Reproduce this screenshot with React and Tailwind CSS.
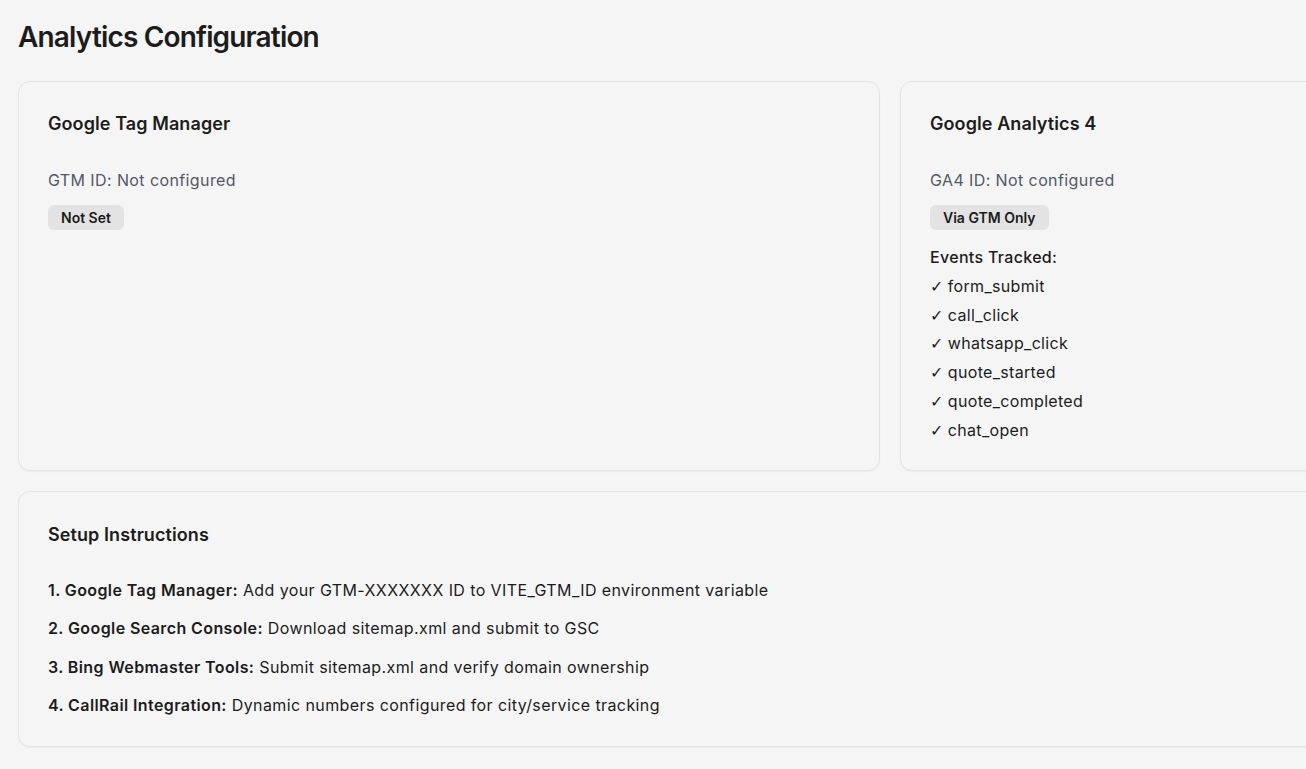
import React from "react";

const events = ["form_submit", "call_click", "whatsapp_click", "quote_started", "quote_completed", "chat_open"];

const steps = [
  ["1. Google Tag Manager:", "Add your GTM-XXXXXXX ID to VITE_GTM_ID environment variable"],
  ["2. Google Search Console:", "Download sitemap.xml and submit to GSC"],
  ["3. Bing Webmaster Tools:", "Submit sitemap.xml and verify domain ownership"],
  ["4. CallRail Integration:", "Dynamic numbers configured for city/service tracking"],
];

function Card({ title, children }) {
  return (
    <div className="rounded-xl border border-[#e3e3e3] bg-[#f5f5f5] shadow-[0_1px_2px_rgba(0,0,0,0.04)] px-[29px] pt-[28px] pb-[25px]">
      <h3 className="text-lg leading-7 font-semibold text-[#1c1c1c] tracking-[0.005em]">{title}</h3>
      <div className="mt-[30px]">{children}</div>
    </div>
  );
}

export default function App() {
  return (
    <div
      className="min-h-[769px] w-full overflow-hidden bg-[#f5f5f5] text-[#1c1c1c]"
      style={{ fontFamily: "Inter, 'Noto Sans', sans-serif" }}
    >
      <div className="w-[1762px] pl-[18px] pt-[19px] pb-[22px]">
        <h1 className="text-[28px] leading-9 font-semibold tracking-[-0.03em] text-[#1c1c1c]">
          Analytics Configuration
        </h1>
        <div className="mt-[26px] grid grid-cols-2 gap-5">
          <Card title="Google Tag Manager">
            <p className="text-base leading-6 tracking-[0.025em] text-[#525866]">GTM ID: Not configured</p>
            <span className="mt-[13px] inline-flex h-[25px] items-center rounded-md bg-[#e3e3e3] px-[13px] text-sm font-semibold text-[#1c1c1c]">
              Not Set
            </span>
          </Card>
          <Card title="Google Analytics 4">
            <p className="text-base leading-6 tracking-[0.025em] text-[#525866]">GA4 ID: Not configured</p>
            <span className="mt-[13px] inline-flex h-[25px] items-center rounded-md bg-[#e3e3e3] px-[13px] text-sm font-semibold text-[#1c1c1c]">
              Via GTM Only
            </span>
            <div className="mt-[13px] text-base leading-[28.8px] tracking-[0.02em]">
              <p className="font-medium">Events Tracked:</p>
              {events.map((e) => (
                <p key={e} className="h-[28.8px]">
                  <span
                    style={{ fontFamily: "'DejaVu Sans', sans-serif" }}
                    className="tracking-normal leading-none font-light"
                  >
                    ✓
                  </span>{" "}
                  {e}
                </p>
              ))}
            </div>
          </Card>
        </div>
        <div className="mt-5 rounded-xl border border-[#e3e3e3] bg-[#f5f5f5] shadow-[0_1px_2px_rgba(0,0,0,0.04)] px-[29px] pt-[29px] pb-[29px]">
          <h3 className="text-lg leading-7 font-semibold text-[#1c1c1c] tracking-[0.005em]">Setup Instructions</h3>
          <div className="mt-[29px] flex flex-col gap-[14.5px]">
            {steps.map(([b, t]) => (
              <p key={b} className="text-base leading-6 tracking-[0.025em] text-[#1c1c1c]">
                <span className="font-semibold">{b}</span> {t}
              </p>
            ))}
          </div>
        </div>
      </div>
    </div>
  );
}
